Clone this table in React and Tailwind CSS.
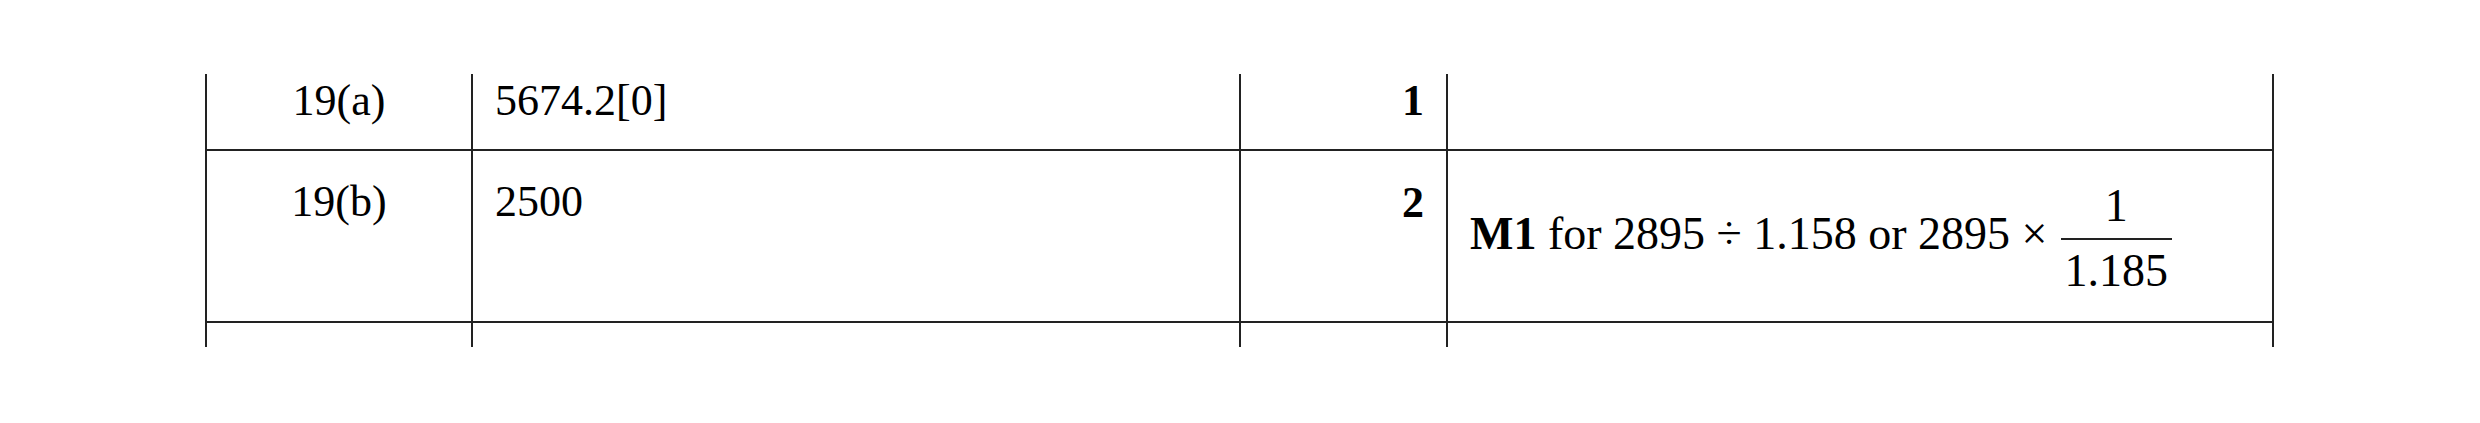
import React from "react";

const cell = "border-l-2 border-[#222]";

const Fraction = ({ top, bottom }) => (
    <div className="ml-[13px] flex flex-col items-center">
        <span>{top}</span>
        <div className="mt-[9px] mb-[8px] h-[2px] w-full bg-[#222]" />
        <span className="px-[4px]">{bottom}</span>
    </div>
);

const App = () => {
    return (
        <div className="min-h-screen bg-white pt-[74px] pl-[205px] text-black font-['Liberation_Serif','Times_New_Roman',serif] text-[44px] leading-none">
            <div className="w-[2069px]">
                {/* Row 19(a) */}
                <div className="flex h-[77px] border-b-2 border-[#222]">
                    <div className={`${cell} w-[266px] pt-[5px] text-center`}>19(a)</div>
                    <div className={`${cell} w-[768px] pt-[5px] pl-[22px]`}>5674.2[0]</div>
                    <div className={`${cell} w-[207px] pt-[5px] pr-[22px] text-right font-bold`}>1</div>
                    <div className={`${cell} flex-1 border-r-2`} />
                </div>

                {/* Row 19(b) */}
                <div className="flex h-[172px] border-b-2 border-[#222]">
                    <div className={`${cell} w-[266px] pt-[29px] text-center`}>19(b)</div>
                    <div className={`${cell} w-[768px] pt-[29px] pl-[22px]`}>2500</div>
                    <div className={`${cell} w-[207px] pt-[30px] pr-[22px] text-right font-bold`}>2</div>
                    <div className={`${cell} flex-1 border-r-2 flex items-start pt-[32px] pl-[22px] text-[46px]`}>
                        <span className="mt-[28px] whitespace-pre">
                            <b>M1</b> for 2895 ÷ 1.158 or 2895 ×
                        </span>
                        <Fraction top="1" bottom="1.185" />
                    </div>
                </div>

                {/* next row, cut off */}
                <div className="flex h-[24px]">
                    <div className={`${cell} w-[266px]`} />
                    <div className={`${cell} w-[768px]`} />
                    <div className={`${cell} w-[207px]`} />
                    <div className={`${cell} flex-1 border-r-2`} />
                </div>
            </div>
        </div>
    );
};

export default App;
